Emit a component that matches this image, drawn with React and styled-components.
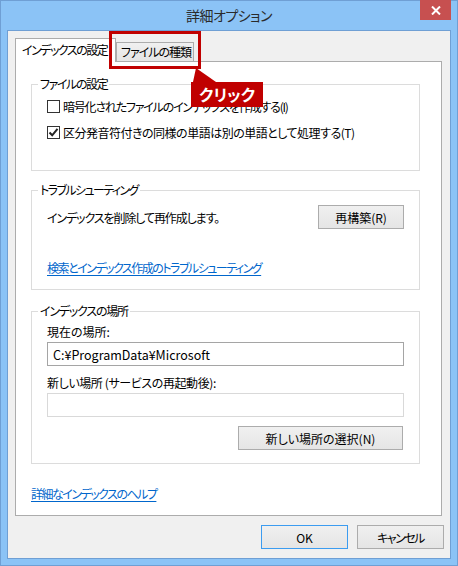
import styled, { createGlobalStyle } from "styled-components";

const GlobalStyle = createGlobalStyle`
  html, body {
    margin: 0;
    padding: 0;
    background: #ffffff;
  }
  body {
    font-family: "Noto Sans CJK JP", "Noto Sans", sans-serif;
    font-size: 12px;
    font-feature-settings: "palt";
    letter-spacing: -1.4px;
    color: #000;
  }
  * {
    box-sizing: border-box;
  }
`;

const App = () => {
  return (
    <>
      <GlobalStyle />
      <Window>
        <TitleBar>
          <Title>詳細オプション</Title>
          <CloseButton aria-label="閉じる">
            <svg width="10" height="9" viewBox="0 0 10 9">
              <path d="M1 0.5 L9 8.5 M9 0.5 L1 8.5" stroke="#fff" strokeWidth="2" />
            </svg>
          </CloseButton>
        </TitleBar>

        <ClientFrame>
          <Client>
            <TabRow>
              <Tab $active>インデックスの設定</Tab>
              <Tab $ls={-1}>ファイルの種類</Tab>
            </TabRow>

            <Panel>
              {/* ファイルの設定 */}
              <Group $height={94}>
                <Legend>ファイルの設定</Legend>
                <CheckList>
                  <CheckRow $ls={-1.2}>
                    <CheckBox />
                    暗号化されたファイルのインデックスを作成する(I)
                  </CheckRow>
                  <CheckRow $ls={-0.5}>
                    <CheckBox>
                      <svg width="11" height="11" viewBox="0 0 11 11">
                        <path
                          d="M1.5 5.5 L4.2 8.3 L9.5 1.8"
                          stroke="#222"
                          strokeWidth="2"
                          fill="none"
                        />
                      </svg>
                    </CheckBox>
                    区分発音符付きの同様の単語は別の単語として処理する(T)
                  </CheckRow>
                </CheckList>
              </Group>

              {/* トラブルシューティング */}
              <Group $height={107} $gap={12}>
                <Legend $ls={-1.6}>トラブルシューティング</Legend>
                <ActionRow>
                  <ActionText>インデックスを削除して再作成します。</ActionText>
                  <Button $width={86}>再構築(R)</Button>
                </ActionRow>
                <Link href="#" $top={32}>
                  検索とインデックス作成のトラブルシューティング
                </Link>
              </Group>

              {/* インデックスの場所 */}
              <Group $height={160} $gap={14}>
                <Legend $ls={-1.2}>インデックスの場所</Legend>
                <FieldLabel $top={6} $ls={0}>
                  現在の場所:
                </FieldLabel>
                <TextBox value="C:¥ProgramData¥Microsoft" readOnly />
                <FieldLabel $top={9} $ls={-0.4}>
                  新しい場所 (サービスの再起動後):
                </FieldLabel>
                <TextBox $disabled value="" readOnly />
                <RightButton $width={165}>新しい場所の選択(N)</RightButton>
              </Group>

              <Link href="#" $top={23}>
                詳細なインデックスのヘルプ
              </Link>
            </Panel>

            <DialogButtons>
              <Button $width={87} $primary>
                OK
              </Button>
              <Button $width={87} $ls={-1.5}>
                キャンセル
              </Button>
            </DialogButtons>
          </Client>
        </ClientFrame>

        {/* annotation */}
        <Highlight />
        <Callout>
          <svg width="26" height="14" viewBox="0 0 26 14">
            <polygon points="5,0 2,14 25,14" fill="#c00000" />
          </svg>
          クリック
        </Callout>
      </Window>
    </>
  );
};

export default App;

// Styled Components
const Window = styled.div`
  position: relative;
  width: 458px;
  height: 566px;
  background: #8bc3f6;
  border: 1px solid #6f9fd4;
  display: flex;
  flex-direction: column;
`;

const TitleBar = styled.div`
  height: 29px;
  display: grid;
  grid-template-columns: 1fr auto 1fr;
  align-items: start;
`;

const Title = styled.div`
  grid-column: 2;
  font-size: 14px;
  line-height: 29px;
  letter-spacing: -0.5px;
  color: #2a2a2a;
`;

const CloseButton = styled.div`
  grid-column: 3;
  justify-self: end;
  width: 31px;
  height: 20px;
  margin-top: -1px;
  margin-right: 6px;
  background: #c75050;
  display: flex;
  align-items: center;
  justify-content: center;
`;

const ClientFrame = styled.div`
  flex: 1;
  padding: 0 6px 6px;
  display: flex;
`;

const Client = styled.div`
  flex: 1;
  background: #f0f0f0;
  border: 1px solid #6f9fd4;
  padding: 7px 6px 0 7px;
  display: flex;
  flex-direction: column;
`;

const TabRow = styled.div`
  display: flex;
  align-items: flex-end;
  height: 23px;
`;

const Tab = styled.div`
  position: relative;
  z-index: 1;
  height: ${(p) => (p.$active ? "24px" : "19px")};
  width: ${(p) => (p.$active ? "101px" : "78px")};
  margin-bottom: ${(p) => (p.$active ? "-1px" : "0")};
  background: ${(p) =>
    p.$active ? "#ffffff" : "linear-gradient(#f0f0f0, #e5e5e5)"};
  border: 1px solid #acacac;
  border-bottom: none;
  padding-left: ${(p) => (p.$active ? "6px" : "4px")};
  line-height: ${(p) => (p.$active ? "22px" : "18px")};
  letter-spacing: ${(p) => (p.$ls !== undefined ? p.$ls : -1.5)}px;
  white-space: nowrap;
`;

const Panel = styled.div`
  height: 455px;
  margin-right: 2px;
  background: #ffffff;
  border: 1px solid #acacac;
  padding: 15px 21px 0 15px;
  display: flex;
  flex-direction: column;
`;

const Group = styled.fieldset`
  margin: ${(p) => p.$gap || 0}px 0 0;
  height: ${(p) => p.$height}px;
  border: 1px solid #dcdcdc;
  padding: 0 15px;
  min-width: 0;
  display: flex;
  flex-direction: column;
`;

const Legend = styled.legend`
  margin-left: -9px;
  padding: 0 2px;
  line-height: 14px;
  letter-spacing: ${(p) => (p.$ls !== undefined ? p.$ls : -1.4)}px;
`;

const CheckList = styled.div`
  display: flex;
  flex-direction: column;
  gap: 10px;
  padding-top: 7px;
`;

const CheckRow = styled.label`
  display: flex;
  align-items: center;
  height: 16px;
  white-space: nowrap;
  letter-spacing: ${(p) => p.$ls}px;
`;

const CheckBox = styled.span`
  width: 13px;
  height: 13px;
  margin-right: 3px;
  border: 1px solid #333;
  background: #fff;
  display: flex;
  align-items: center;
  justify-content: center;
  flex-shrink: 0;
`;

const ActionRow = styled.div`
  margin-top: 8px;
  display: flex;
  align-items: center;
  justify-content: space-between;
  height: 24px;
`;

const ActionText = styled.span`
  letter-spacing: -1.1px;
`;

const Button = styled.button`
  width: ${(p) => p.$width}px;
  height: 24px;
  padding: 0;
  font: inherit;
  letter-spacing: ${(p) => p.$ls || 0}px;
  color: #000;
  background: linear-gradient(#f0f0f0, #e5e5e5);
  border: 1px solid ${(p) => (p.$primary ? "#3c9cf0" : "#acacac")};
  border-radius: 0;
`;

const RightButton = styled(Button)`
  margin-top: 9px;
  margin-right: 1px;
  align-self: flex-end;
`;

const Link = styled.a`
  margin-top: ${(p) => p.$top}px;
  line-height: 14px;
  letter-spacing: -1.5px;
  color: #0066cc;
  text-decoration: underline;
  text-underline-offset: 2px;
  align-self: flex-start;
`;

const FieldLabel = styled.div`
  margin-top: ${(p) => p.$top}px;
  line-height: 15px;
  letter-spacing: ${(p) => p.$ls}px;
`;

const TextBox = styled.input`
  margin-top: 3px;
  height: 24px;
  width: 100%;
  padding: 0 5px;
  font: inherit;
  font-size: 12.5px;
  letter-spacing: 0;
  color: #000;
  background: #fff;
  border: 1px solid ${(p) => (p.$disabled ? "#d9d9d9" : "#a5a5a5")};
  outline: none;
`;

const DialogButtons = styled.div`
  margin-top: 9px;
  display: flex;
  justify-content: flex-end;
  gap: 9px;
`;

const Highlight = styled.div`
  position: absolute;
  left: 108px;
  top: 30px;
  width: 92px;
  height: 38px;
  border: 3px solid #c00000;
  z-index: 2;
`;

const Callout = styled.div`
  position: absolute;
  left: 190px;
  top: 81px;
  width: 72px;
  height: 25px;
  background: #c00000;
  color: #fff;
  font-size: 16px;
  font-weight: 700;
  line-height: 25px;
  letter-spacing: 0;
  text-align: center;
  z-index: 2;

  svg {
    position: absolute;
    left: 0;
    top: -14px;
  }
`;
